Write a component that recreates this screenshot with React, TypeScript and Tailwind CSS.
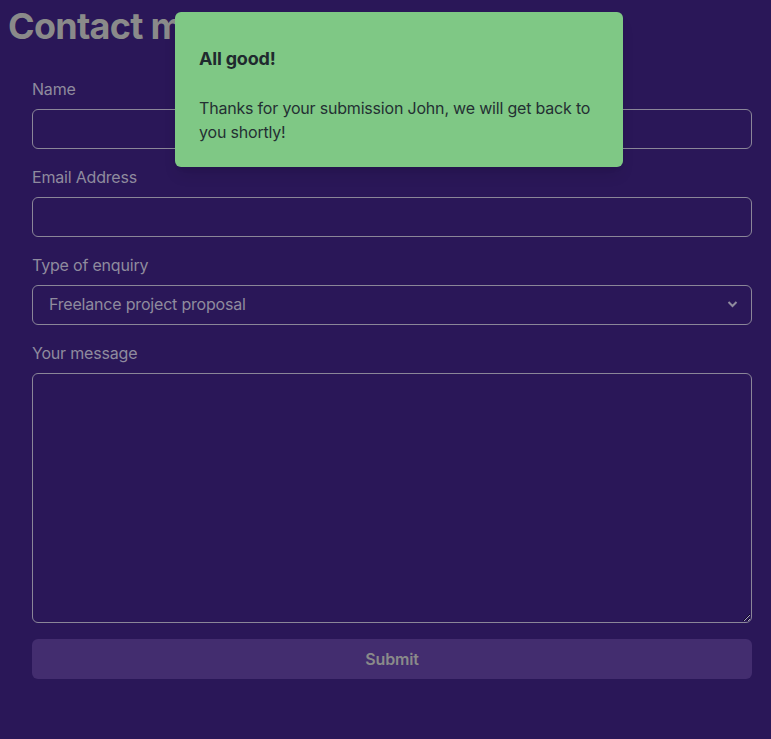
import React from "react";

const Field = ({ label, children }: { label: string; children: React.ReactNode }) => (
  <div className="flex flex-col gap-2">
    <label className="text-base leading-6 text-[#8f8b9e]">{label}</label>
    {children}
  </div>
);

export default function App() {
  return (
    <div
      className="relative min-h-[739px] bg-[#2a1758] pt-[6px] pb-10 tracking-[-0.012em]"
      style={{ fontFamily: "Inter, 'Noto Sans', sans-serif" }}
    >
      <h1 className="px-2 text-4xl leading-10 font-bold tracking-[-0.02em] text-[#8a8a8a]">Contact me</h1>

      <form className="mt-[31px] flex flex-col gap-4 px-8" onSubmit={(e) => e.preventDefault()}>
        <div className="w-[720px] flex flex-col gap-4">
          <Field label="Name">
            <input className="h-10 rounded-md border border-[#8a8698] bg-transparent px-4 text-[#8f8b9e] outline-none" />
          </Field>
          <Field label="Email Address">
            <input className="h-10 rounded-md border border-[#8a8698] bg-transparent px-4 text-[#8f8b9e] outline-none" />
          </Field>
          <Field label="Type of enquiry">
            <div className="relative">
              <select
                defaultValue="freelance"
                className="h-10 w-full appearance-none rounded-md border border-[#8a8698] bg-transparent px-4 pb-[2px] text-base text-[#8f8b9e] outline-none"
              >
                <option value="freelance">Freelance project proposal</option>
              </select>
              <svg
                className="pointer-events-none absolute right-[14px] top-[15px]"
                width="11"
                height="8"
                viewBox="0 0 11 8"
                fill="none"
              >
                <path d="M1.5 2 5.5 6l4-4" stroke="#8f8b9e" strokeWidth="2" />
              </svg>
            </div>
          </Field>
          <Field label="Your message">
            <textarea className="h-[250px] rounded-md border border-[#8a8698] bg-transparent px-4 py-2 text-[#8f8b9e] outline-none" />
          </Field>
          <button
            type="submit"
            className="h-10 rounded-md bg-[#432d6f] text-base font-semibold text-[#8a8a8a]"
          >
            Submit
          </button>
        </div>
      </form>

      <div className="absolute left-[175px] top-3 w-[448px] rounded-md bg-[#7fc885] px-6 pt-[33px] pb-[23px] text-[#1f2a2e] shadow-lg">
        <p className="text-lg leading-7 font-bold">All good!</p>
        <p className="mt-[23px] text-base leading-6 text-[#243033]">
          Thanks for your submission John, we will get back to you shortly!
        </p>
      </div>
    </div>
  );
}
